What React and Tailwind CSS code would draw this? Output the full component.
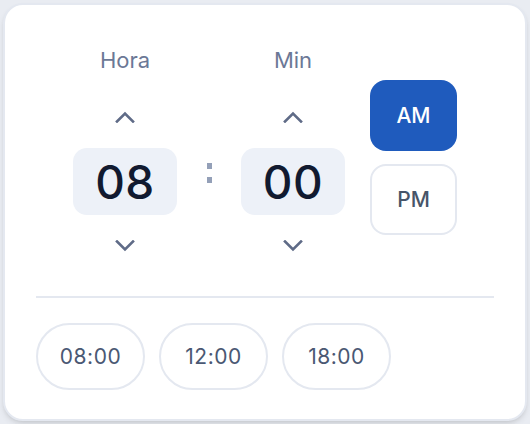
import { useState } from "react";

const Chevron = ({ up }) => (
  <svg width="20" height="12" viewBox="0 0 20 12" fill="none">
    <polyline
      points={up ? "2,10.5 10,2.5 18,10.5" : "2,1.5 10,9.5 18,1.5"}
      stroke="#5f6b87"
      strokeWidth="2.6"
      strokeLinecap="square"
    />
  </svg>
);

const Spinner = ({ label, value }) => (
  <div className="flex flex-col items-center w-[104px]">
    <span className="text-[22px] leading-[28px] text-[#6b7896]">{label}</span>
    <button className="mt-[31px] h-[24px] w-[40px] flex items-center justify-center">
      <Chevron up />
    </button>
    <div className="mt-[19px] h-[67px] w-[104px] rounded-[14px] bg-[#edf1f8] flex items-center justify-center">
      <span className="text-[46px] leading-none font-medium text-[#111a30] tracking-[0.5px]">{value}</span>
    </div>
    <button className="mt-[19px] h-[24px] w-[40px] flex items-center justify-center">
      <Chevron />
    </button>
  </div>
);

export default function App() {
  const [period, setPeriod] = useState("AM");
  const presets = ["08:00", "12:00", "18:00"];

  return (
    <div
      className="w-[530px] h-[424px] bg-[#e9ecf2] p-[3px]"
      style={{ fontFamily: "Inter, 'Noto Sans', sans-serif" }}
    >
      <div className="w-[524px] h-[418px] bg-white rounded-[20px] border-2 border-[#e4e8f0] shadow-md px-[31px] pt-[41px]">
        <div className="flex justify-center">
          <Spinner label="Hora" value="08" />
          <div className="w-[64px] flex flex-col items-center pt-[117px] gap-[8px]">
            <div className="w-[5px] h-[6px] bg-[#94a0b8]" />
            <div className="w-[5px] h-[6px] bg-[#94a0b8]" />
          </div>
          <Spinner label="Min" value="00" />
          <div className="ml-[25px] mt-[34px] flex flex-col gap-[13px]">
            {["AM", "PM"].map((p) => (
              <button
                key={p}
                onClick={() => setPeriod(p)}
                className={
                  period === p
                    ? "w-[87px] h-[71px] rounded-[16px] bg-[#1f5bbd] text-white text-[21px] font-medium"
                    : "w-[87px] h-[71px] rounded-[16px] border-2 border-[#e4e8f0] bg-white text-[#475569] text-[21px] font-medium"
                }
              >
                {p}
              </button>
            ))}
          </div>
        </div>
        <div className="mt-[38px] h-[2px] bg-[#e4e8f0]" />
        <div className="mt-[25px] flex gap-[14px]">
          {presets.map((t) => (
            <button
              key={t}
              className="w-[109px] h-[67px] rounded-full border-2 border-[#e4e8f0] text-[21px] text-[#4a5873] tracking-[0.5px]"
            >
              {t}
            </button>
          ))}
        </div>
      </div>
    </div>
  );
}
